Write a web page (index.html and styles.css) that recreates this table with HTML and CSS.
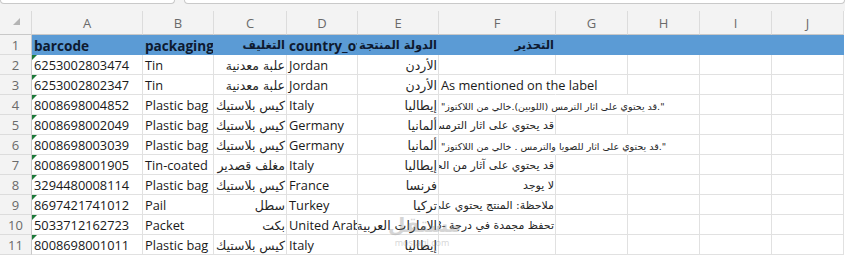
FILE: index.html
```html
<!DOCTYPE html>
<html lang="en">
<head>
<meta charset="utf-8">
<title>Sheet</title>
<link rel="stylesheet" href="styles.css">
</head>
<body>
<div class="app">
  <div class="topbar">
    <div class="namebox"></div>
    <div class="formulabox"></div>
  </div>
  <div class="sheet">
    <div class="corner"><svg width="7" height="7" viewBox="0 0 7 7"><path d="M7 0 L7 7 L0 7 Z" fill="#b4b4b4"/></svg></div>
    <div class="ch">A</div><div class="ch">B</div><div class="ch">C</div><div class="ch">D</div><div class="ch">E</div><div class="ch">F</div><div class="ch">G</div><div class="ch">H</div><div class="ch">I</div><div class="ch">J</div>

    <div class="rh">1</div>
    <div class="c hd">barcode</div><div class="c hd">packaging</div><div class="c hd ar">التغليف</div><div class="c hd">country_of_origin</div><div class="c hd ar">الدولة المنتجة</div><div class="c hd ar">التحذير</div><div class="c hd"></div><div class="c hd"></div><div class="c hd"></div><div class="c hd"></div>

    <div class="rh">2</div>
    <div class="c g">6253002803474</div><div class="c">Tin</div><div class="c ar">علبة معدنية</div><div class="c">Jordan</div><div class="c ar">الأردن</div><div class="c"></div><div class="c"></div><div class="c"></div><div class="c"></div><div class="c"></div>

    <div class="rh">3</div>
    <div class="c g">6253002802347</div><div class="c">Tin</div><div class="c ar">علبة معدنية</div><div class="c">Jordan</div><div class="c ar">الأردن</div><div class="c ov nb">As mentioned on the label</div><div class="c"></div><div class="c"></div><div class="c"></div><div class="c"></div>

    <div class="rh">4</div>
    <div class="c g">8008698004852</div><div class="c">Plastic bag</div><div class="c ar">كيس بلاستيك</div><div class="c">Italy</div><div class="c ar">إيطاليا</div><div class="c ov nb"><span class="ovt" dir="rtl">".قد يحتوي على اثار الترمس (اللوبين).خالي من اللاكتوز"</span></div><div class="c nb"></div><div class="c"></div><div class="c"></div><div class="c"></div>

    <div class="rh">5</div>
    <div class="c g">8008698002049</div><div class="c">Plastic bag</div><div class="c ar">كيس بلاستيك</div><div class="c">Germany</div><div class="c ar">ألمانيا</div><div class="c ar f">قد يحتوي على اثار الترمس (اللوبين)</div><div class="c"></div><div class="c"></div><div class="c"></div><div class="c"></div>

    <div class="rh">6</div>
    <div class="c g">8008698003039</div><div class="c">Plastic bag</div><div class="c ar">كيس بلاستيك</div><div class="c">Germany</div><div class="c ar">ألمانيا</div><div class="c ov nb"><span class="ovt" dir="rtl">".قد يحتوي على اثار للصويا والترمس . خالي من اللاكتوز"</span></div><div class="c nb"></div><div class="c"></div><div class="c"></div><div class="c"></div>

    <div class="rh">7</div>
    <div class="c g">8008698001905</div><div class="c">Tin-coated</div><div class="c ar">مغلف قصدير</div><div class="c">Italy</div><div class="c ar">إيطاليا</div><div class="c ar f">قد يحتوي على آثار من الحليب</div><div class="c"></div><div class="c"></div><div class="c"></div><div class="c"></div>

    <div class="rh">8</div>
    <div class="c g">3294480008114</div><div class="c">Plastic bag</div><div class="c ar">كيس بلاستيك</div><div class="c">France</div><div class="c ar">فرنسا</div><div class="c ar f">لا يوجد</div><div class="c"></div><div class="c"></div><div class="c"></div><div class="c"></div>

    <div class="rh">9</div>
    <div class="c g">8697421741012</div><div class="c">Pail</div><div class="c ar">سطل</div><div class="c">Turkey</div><div class="c ar">تركيا</div><div class="c ar f">ملاحظة: المنتج يحتوي على</div><div class="c"></div><div class="c"></div><div class="c"></div><div class="c"></div>

    <div class="rh">10</div>
    <div class="c g">5033712162723</div><div class="c">Packet</div><div class="c ar">بكت</div><div class="c">United Arab Emirates</div><div class="c ar">الامارات العربية المتحدة</div><div class="c ar f">تحفظ مجمدة في درجة -18</div><div class="c"></div><div class="c"></div><div class="c"></div><div class="c"></div>

    <div class="rh">11</div>
    <div class="c g">8008698001011</div><div class="c">Plastic bag</div><div class="c ar">كيس بلاستيك</div><div class="c">Italy</div><div class="c ar">إيطاليا</div><div class="c"></div><div class="c"></div><div class="c"></div><div class="c"></div><div class="c"></div>
  </div>
  <div class="watermark">
    <div class="wm-logo">مستقل</div>
    <div class="wm-text">mostaql.com</div>
  </div>
</div>
</body>
</html>
```

FILE: styles.css
```css
* { box-sizing: border-box; }
html, body { margin: 0; padding: 0; background: #ffffff; }
body { width: 845px; height: 255px; overflow: hidden; font-family: "Open Sans", "DejaVu Sans", sans-serif; }
.app { position: relative; width: 845px; height: 255px; background: #f3f3f3; }

.topbar { height: 11px; display: flex; gap: 9px; align-items: flex-start; }
.namebox, .formulabox {
  height: 4px;
  background: #ffffff;
  border: 1px solid #c9c9c9;
  border-top: none;
  border-radius: 0 0 5px 5px;
}
.namebox { width: 175px; }
.formulabox { flex: 1; }

.sheet {
  display: grid;
  grid-template-columns: 32px 111px 71px 73px 71px 81px 117px 72px 72px 72px 72px;
  grid-template-rows: 24px;
  grid-auto-rows: 20px;
  background: #ffffff;
}

.corner {
  background: #f3f3f3;
  border-right: 1px solid #dadada;
  border-bottom: 1px solid #c8c8c8;
  display: flex;
  align-items: flex-end;
  justify-content: flex-end;
  padding: 0 11px 9px 0;
}
.corner svg { display: block; }

.ch {
  background: #f3f3f3;
  border-right: 1px solid #dcdcdc;
  border-bottom: 1px solid #c8c8c8;
  color: #6a6a6a;
  font-size: 13px;
  text-align: center;
  line-height: 24px;
}

.rh {
  background: #f3f3f3;
  border-right: 1px solid #c8c8c8;
  border-bottom: 1px solid #dcdcdc;
  color: #6a6a6a;
  font-size: 13px;
  text-align: center;
  line-height: 21px;
}

.c {
  position: relative;
  border-right: 1px solid #e1e1e1;
  border-bottom: 1px solid #e1e1e1;
  padding: 0 2px;
  font-size: 12.8px;
  line-height: 21px;
  color: #1a1a1a;
  white-space: nowrap;
  overflow: hidden;
}

.c.ar {
  direction: rtl;
  text-align: right;
  padding: 0 1px;
  font-family: "DejaVu Sans", sans-serif;
  font-size: 12.5px;
  font-weight: 400;
  color: #262626;
}
.c.ar.f { font-size: 11px; }
.c.ov { overflow: visible; z-index: 1; }
.ovt { font-family: "DejaVu Sans", sans-serif; font-size: 9.5px; color: #262626; }
.c.nb { border-right-color: transparent; }

.c.hd {
  background: #5b9bd5;
  border-right-color: #5b9bd5;
  border-bottom-color: #5b9bd5;
  color: #0e1a30;
  font-weight: 700;
  font-size: 13.6px;
}
.c.hd.ar { font-size: 11.5px; font-weight: 700; color: #0e1a30; }

.c.g::before {
  content: "";
  position: absolute;
  left: 0;
  top: 0;
  border-top: 5px solid #1e7a3a;
  border-right: 5px solid transparent;
}

.watermark {
  position: absolute;
  left: 388px;
  top: 212px;
  width: 68px;
  text-align: center;
  color: #8a8a8a;
  opacity: 0.35;
  pointer-events: none;
}
.wm-logo { font-family: "DejaVu Sans", sans-serif; font-size: 20px; font-weight: 700; line-height: 26px; }
.wm-text { font-size: 9px; line-height: 10px; }
```
